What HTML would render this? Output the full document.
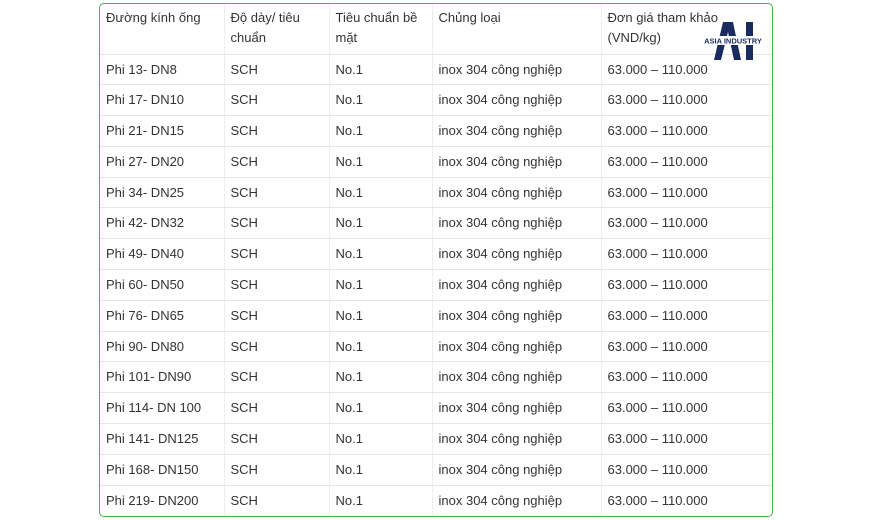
<!DOCTYPE html>
<html><head><meta charset="utf-8"><style>
html,body{margin:0;padding:0;background:#fff;width:875px;height:520px;overflow:hidden}
.box{position:absolute;left:99px;top:3px;width:672px;height:512px;border:1px solid #4cae4c;border-radius:5px;overflow:hidden}
table{border-collapse:collapse;width:100%;font-family:"Liberation Sans",Arial,sans-serif;font-size:13px;color:#333}
td{border-right:1px solid #eee;border-bottom:1px solid #e6e6e6;padding:0 6px;vertical-align:top;line-height:20px;height:30.8px;box-sizing:border-box;padding-top:5px}
td:last-child{border-right:none}
tr.h td{height:50px;padding-top:4px}
tr:last-child td{border-bottom:none}
</style></head><body>
<div class="box"><table>
<colgroup><col style="width:124px"><col style="width:105px"><col style="width:103px"><col style="width:169px"><col></colgroup>
<tr class="h"><td>Đường kính ống</td><td>Độ dày/ tiêu chuẩn</td><td>Tiêu chuẩn bề mặt</td><td>Chủng loại</td><td>Đơn giá tham khảo (VND/kg)</td></tr>
<tr><td>Phi 13- DN8</td><td>SCH</td><td>No.1</td><td>inox 304 công nghiệp</td><td>63.000 – 110.000</td></tr>
<tr><td>Phi 17- DN10</td><td>SCH</td><td>No.1</td><td>inox 304 công nghiệp</td><td>63.000 – 110.000</td></tr>
<tr><td>Phi 21- DN15</td><td>SCH</td><td>No.1</td><td>inox 304 công nghiệp</td><td>63.000 – 110.000</td></tr>
<tr><td>Phi 27- DN20</td><td>SCH</td><td>No.1</td><td>inox 304 công nghiệp</td><td>63.000 – 110.000</td></tr>
<tr><td>Phi 34- DN25</td><td>SCH</td><td>No.1</td><td>inox 304 công nghiệp</td><td>63.000 – 110.000</td></tr>
<tr><td>Phi 42- DN32</td><td>SCH</td><td>No.1</td><td>inox 304 công nghiệp</td><td>63.000 – 110.000</td></tr>
<tr><td>Phi 49- DN40</td><td>SCH</td><td>No.1</td><td>inox 304 công nghiệp</td><td>63.000 – 110.000</td></tr>
<tr><td>Phi 60- DN50</td><td>SCH</td><td>No.1</td><td>inox 304 công nghiệp</td><td>63.000 – 110.000</td></tr>
<tr><td>Phi 76- DN65</td><td>SCH</td><td>No.1</td><td>inox 304 công nghiệp</td><td>63.000 – 110.000</td></tr>
<tr><td>Phi 90- DN80</td><td>SCH</td><td>No.1</td><td>inox 304 công nghiệp</td><td>63.000 – 110.000</td></tr>
<tr><td>Phi 101- DN90</td><td>SCH</td><td>No.1</td><td>inox 304 công nghiệp</td><td>63.000 – 110.000</td></tr>
<tr><td>Phi 114- DN 100</td><td>SCH</td><td>No.1</td><td>inox 304 công nghiệp</td><td>63.000 – 110.000</td></tr>
<tr><td>Phi 141- DN125</td><td>SCH</td><td>No.1</td><td>inox 304 công nghiệp</td><td>63.000 – 110.000</td></tr>
<tr><td>Phi 168- DN150</td><td>SCH</td><td>No.1</td><td>inox 304 công nghiệp</td><td>63.000 – 110.000</td></tr>
<tr><td>Phi 219- DN200</td><td>SCH</td><td>No.1</td><td>inox 304 công nghiệp</td><td>63.000 – 110.000</td></tr>
</table></div>
<svg style="position:absolute;left:700px;top:18px" width="66" height="46" viewBox="0 0 66 46">
<polygon points="23,4 33,4 41,42 34,42 28,14 21,42 14,42" fill="#1a2b5f"/>
<rect x="46" y="4" width="7" height="38" fill="#1a2b5f"/>
<rect x="5" y="18" width="56" height="9" fill="#fff"/>
<text x="33" y="25.5" text-anchor="middle" font-family="Liberation Sans,Arial,sans-serif" font-weight="bold" font-size="7.5" fill="#1a2b5f">ASIA INDUSTRY</text>
</svg>
</body></html>
